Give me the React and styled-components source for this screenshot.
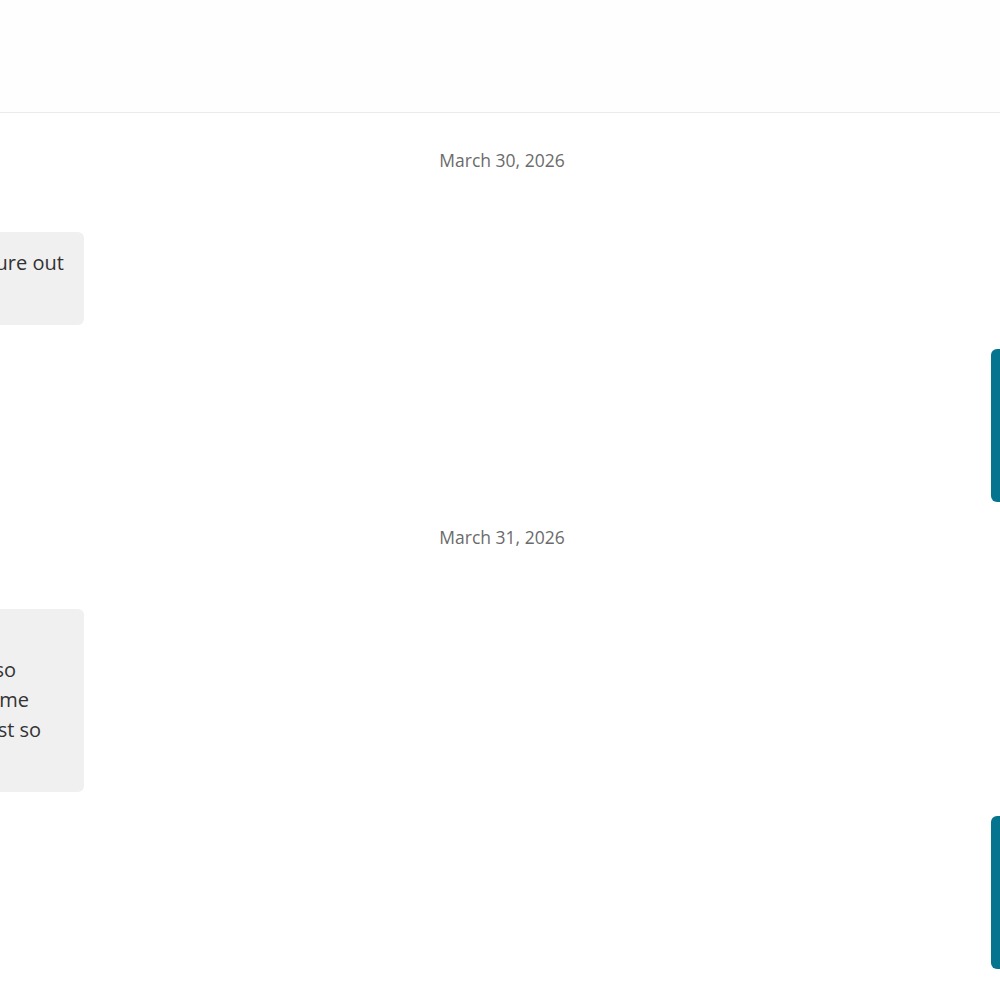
import styled, { createGlobalStyle } from "styled-components";

const GlobalStyle = createGlobalStyle`
  html, body {
    margin: 0;
    padding: 0;
    overflow: hidden;
    background: #ffffff;
  }
  body {
    font-family: "Open Sans", "Liberation Sans", sans-serif;
    color: #333333;
  }
`;

const days = [
  {
    date: "March 30, 2026",
    messages: [
      {
        from: "them",
        lines: ["Okay I'm still trying really hard to figure out", "when we should meet."],
      },
      {
        from: "me",
        lines: [
          "No worries at all, I'm pretty flexible",
          "this week. Most afternoons work for me",
          "after three, and Thursday is wide open",
          "if that is easier for you.",
        ],
      },
    ],
  },
  {
    date: "March 31, 2026",
    messages: [
      {
        from: "them",
        lines: [
          "Morning! I asked the team about",
          "the deadlines and they said it's fine so",
          "we can wait a day if we need more time",
          "Let me know if this works for you, just so",
          "I can update the calendar.",
        ],
      },
      {
        from: "me",
        lines: [
          "Thursday afternoon sounds perfect.",
          "I'll block off the time on my side and",
          "bring the notes from last week so we",
          "can go through them together.",
        ],
      },
    ],
  },
];

const App = () => {
  return (
    <Page>
      <GlobalStyle />
      <Header />
      <Thread>
        {days.map((day) => (
          <Day key={day.date}>
            <DateLabel>{day.date}</DateLabel>
            {day.messages.map((msg, i) => (
              <Row key={i}>
                <Bubble $mine={msg.from === "me"}>
                  {msg.lines.map((line, j) => (
                    <Line key={j}>{line}</Line>
                  ))}
                </Bubble>
              </Row>
            ))}
          </Day>
        ))}
      </Thread>
    </Page>
  );
};

export default App;

const Page = styled.div`
  width: 1000px;
  min-height: 1000px;
  display: flex;
  flex-direction: column;
`;

const Header = styled.header`
  height: 112px;
  flex-shrink: 0;
  background: #fefefe;
  border-bottom: 1px solid #ebebeb;
`;

const Thread = styled.main`
  display: flex;
  flex-direction: column;
  gap: 24px;
  padding-top: 36px;
`;

const Day = styled.section`
  display: flex;
  flex-direction: column;
  gap: 24px;
`;

const DateLabel = styled.div`
  margin-bottom: 37px;
  padding-left: 4px;
  text-align: center;
  font-size: 17.5px;
  line-height: 22px;
  color: #6b6b6b;
`;

/* incoming bubbles hang off the left lane, outgoing ones start at the right lane */
const Row = styled.div`
  display: grid;
  grid-template-columns: 84px 1fr 9px;
`;

const Bubble = styled.div`
  grid-column: ${(p) => (p.$mine ? "3" : "1")};
  justify-self: ${(p) => (p.$mine ? "start" : "unsafe end")};
  width: 440px;
  box-sizing: border-box;
  padding: 16px 18px 17px;
  border-radius: 6px;
  background: ${(p) => (p.$mine ? "#05758f" : "#f0f0f0")};
  color: ${(p) => (p.$mine ? "#ffffff" : "#333333")};
  font-size: 20px;
  line-height: 30px;
`;

const Line = styled.span`
  display: block;
  white-space: nowrap;
`;
